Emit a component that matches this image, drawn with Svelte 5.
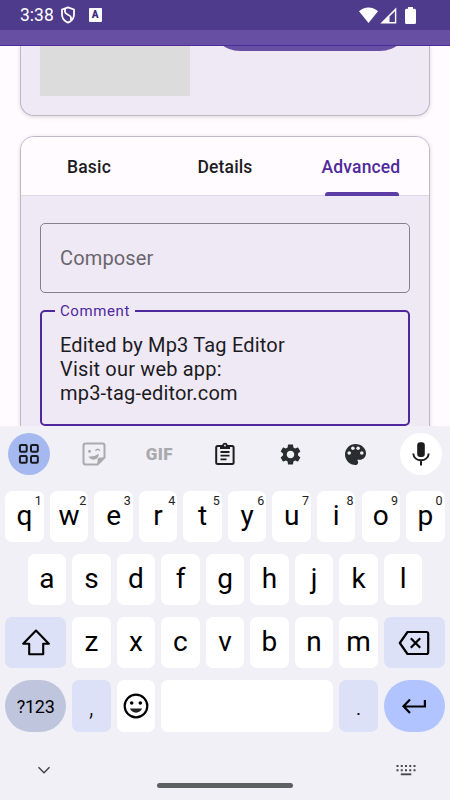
<script lang="ts">
	const tabs = ['Basic', 'Details', 'Advanced'];
	let activeTab = $state('Advanced');
	let composer = $state('');
	let comment = $state('Edited by Mp3 Tag Editor\nVisit our web app:\nmp3-tag-editor.com');

	const topRow = 'qwertyuiop'.split('');
	const homeRow = 'asdfghjkl'.split('');
	const bottomRow = 'zxcvbnm'.split('');

	// the number hint in the corner of each top row key
	const hint = (index: number) => (index + 1) % 10;

	const type = (letter: string) => {
		comment += letter;
	};

	const backspace = () => {
		comment = comment.slice(0, -1);
	};
</script>

<div class="screen">
	<div class="status-bar">
		<span class="clock">3:38</span>
		<svg class="shield" viewBox="0 0 16 18" width="16" height="18">
			<path
				d="M8 1.3 14 3.5V8.5C14 12.3 11.7 15 8 16.6 4.3 15 2 12.3 2 8.5V3.5Z"
				fill="none"
				stroke="#fff"
				stroke-width="1.8"
				stroke-linejoin="round"
			/>
			<path
				d="M5 3V6C5 8.5 11 9 11 11.5V14"
				fill="none"
				stroke="#fff"
				stroke-width="1.8"
			/>
		</svg>
		<span class="letter-box">A</span>
		<span class="spacer"></span>
		<svg viewBox="0 0 19 16" width="19" height="16">
			<path d="M0 4.3C5 -.8 14 -.8 19 4.3L9.5 16Z" fill="#fff" />
		</svg>
		<svg class="signal" viewBox="0 0 17 17" width="17" height="17">
			<path
				fill-rule="evenodd"
				d="M16.3 .5V16.5H.3ZM14.9 4.2 9.5 9.5V15.1H14.9Z"
				fill="#fff"
			/>
		</svg>
		<svg class="battery" viewBox="0 0 11 17" width="11" height="17">
			<path
				d="M3 0H8V1.7H9.5Q11 1.7 11 3.2V15.5Q11 17 9.5 17H1.5Q0 17 0 15.5V3.2Q0 1.7 1.5 1.7H3Z"
				fill="#fff"
			/>
		</svg>
	</div>
	<div class="app-bar"></div>

	<div class="content">
		<div class="card cover-card">
			<div class="cover"></div>
			<button class="cover-button" aria-label="Choose cover"></button>
		</div>

		<div class="card form-card">
			<div class="tabs">
				{#each tabs as tab}
					<button class="tab" class:active={tab === activeTab} onclick={() => (activeTab = tab)}>
						<span class="tab-label">{tab}</span>
						<span class="indicator"></span>
					</button>
				{/each}
			</div>
			<div class="fields">
				<input class="composer" placeholder="Composer" bind:value={composer} />
				<fieldset>
					<legend>Comment</legend>
					<div class="comment">{comment}</div>
				</fieldset>
			</div>
		</div>
	</div>

	<div class="keyboard">
		<div class="toolbar">
			<button class="tool apps" aria-label="Apps">
				<svg viewBox="0 0 22 22" width="22" height="22" fill="none" stroke="#17191f" stroke-width="2">
					<rect x="1.9" y="2" width="6.8" height="6.8" rx="1.3" />
					<rect x="13" y="2" width="6.8" height="6.8" rx="1.3" />
					<rect x="1.9" y="13" width="6.8" height="6.8" rx="1.3" />
					<rect x="13" y="13" width="6.8" height="6.8" rx="1.3" />
				</svg>
			</button>
			<button class="tool" aria-label="Stickers">
				<svg viewBox="0 0 24 24" width="24" height="24">
					<path
						d="M3.5 1.5H20.5Q22.5 1.5 22.5 3.5V15.5L15.5 22.5H3.5Q1.5 22.5 1.5 20.5V3.5Q1.5 1.5 3.5 1.5Z"
						fill="none"
						stroke="#a9a9ae"
						stroke-width="2"
					/>
					<path d="M22.5 15.5H18Q15.5 15.5 15.5 18V22.5Z" fill="#a9a9ae" />
					<circle cx="7.5" cy="9.2" r="1.5" fill="#a9a9ae" />
					<path d="M13.5 8.7Q15.7 6 17.8 8.7" fill="none" stroke="#a9a9ae" stroke-width="1.5" />
					<path d="M6.5 14.5Q12.5 15 16.8 11.7C17 18.5 9 19.5 6.5 14.5Z" fill="#a9a9ae" />
				</svg>
			</button>
			<button class="tool gif">GIF</button>
			<button class="tool" aria-label="Clipboard">
				<svg viewBox="0 0 22 24" width="22" height="24">
					<rect x="2.2" y="4" width="17.4" height="18" rx="1.5" fill="none" stroke="#1d1d20" stroke-width="2" />
					<path d="M6 3H8.2A2.9 2.9 0 0 1 13.8 3H16V7H6Z" fill="#1d1d20" />
					<circle cx="11" cy="3.5" r=".9" fill="#f1f0f7" />
					<path d="M6.5 10H15.5M6.5 13.7H15.5M6.5 17.3H12.5" stroke="#1d1d20" stroke-width="1.8" />
				</svg>
			</button>
			<button class="tool" aria-label="Settings">
				<svg viewBox="2 2 20 20" width="21" height="21">
					<path
						d="M19.14 12.94c.04-.3.06-.61.06-.94 0-.32-.02-.64-.07-.94l2.03-1.58c.18-.14.23-.41.12-.61l-1.92-3.32c-.12-.22-.37-.29-.59-.22l-2.39.96c-.5-.38-1.03-.7-1.62-.94l-.36-2.54c-.04-.24-.24-.41-.48-.41h-3.84c-.24 0-.43.17-.47.41l-.36 2.54c-.59.24-1.13.57-1.62.94l-2.39-.96c-.22-.08-.47 0-.59.22L2.74 8.87c-.12.21-.08.47.12.61l2.03 1.58c-.05.3-.09.63-.09.94s.02.64.07.94l-2.03 1.58c-.18.14-.23.41-.12.61l1.92 3.32c.12.22.37.29.59.22l2.39-.96c.5.38 1.03.7 1.62.94l.36 2.54c.05.24.24.41.48.41h3.84c.24 0 .44-.17.47-.41l.36-2.54c.59-.24 1.13-.56 1.62-.94l2.39.96c.22.08.47 0 .59-.22l1.92-3.32c.12-.22.07-.47-.12-.61l-2.01-1.58zM12 15.6c-1.98 0-3.6-1.62-3.6-3.6s1.62-3.6 3.6-3.6 3.6 1.62 3.6 3.6-1.62 3.6-3.6 3.6z"
						fill="#2b2c30"
					/>
				</svg>
			</button>
			<button class="tool" aria-label="Theme">
				<svg viewBox="2 2 20 20" width="21" height="21">
					<path
						d="M12 2C6.49 2 2 6.49 2 12s4.49 10 10 10c1.38 0 2.5-1.12 2.5-2.5 0-.61-.23-1.2-.64-1.67-.08-.1-.13-.21-.13-.33 0-.28.22-.5.5-.5H16c3.31 0 6-2.69 6-6C22 6.04 17.51 2 12 2z"
						fill="#2b2c30"
					/>
					<circle cx="6" cy="10.5" r="1.7" fill="#f1f0f7" />
					<circle cx="9.5" cy="6" r="1.7" fill="#f1f0f7" />
					<circle cx="14.5" cy="6" r="1.7" fill="#f1f0f7" />
					<circle cx="18" cy="10.5" r="1.7" fill="#f1f0f7" />
				</svg>
			</button>
			<button class="tool mic" aria-label="Voice input">
				<svg viewBox="0 0 18 24" width="18" height="24">
					<rect x="5.2" y=".3" width="7.6" height="14.7" rx="3" fill="#1c1c1f" />
					<path
						d="M1.3 11.5C1.8 20.5 16.2 20.5 16.7 11.5M9 18V23.5"
						fill="none"
						stroke="#1c1c1f"
						stroke-width="2"
					/>
				</svg>
			</button>
		</div>

		<div class="rows">
			<div class="row">
				{#each topRow as letter, i}
					<button class="key" onclick={() => type(letter)}>
						{letter}<span class="hint">{hint(i)}</span>
					</button>
				{/each}
			</div>
			<div class="row home">
				{#each homeRow as letter}
					<button class="key" onclick={() => type(letter)}>{letter}</button>
				{/each}
			</div>
			<div class="row">
				<button class="key wide tinted" aria-label="Shift">
					<svg viewBox="0 0 28 28" width="28" height="28">
						<path
							d="M14 1.5 26.8 14.7H21.2V25.2H7.2V14.7H1.2Z"
							fill="none"
							stroke="#000"
							stroke-width="2.1"
							stroke-linejoin="round"
						/>
					</svg>
				</button>
				{#each bottomRow as letter}
					<button class="key" onclick={() => type(letter)}>{letter}</button>
				{/each}
				<button class="key wide tinted" aria-label="Backspace" onclick={backspace}>
					<svg viewBox="0 0 32 26" width="32" height="26" fill="none" stroke="#000" stroke-width="2.2">
						<path
							d="M9.5 2H28.5Q30.2 2 30.2 3.7V22.3Q30.2 24 28.5 24H9.5L1.8 13Z"
							stroke-linejoin="round"
						/>
						<path d="M12.8 8.2 22.2 17.8M22.2 8.2 12.8 17.8" />
					</svg>
				</button>
			</div>
			<div class="row last">
				<button class="key wide symbols">?123</button>
				<button class="key tinted mark" onclick={() => type(',')}>,</button>
				<button class="key emoji" aria-label="Emoji">
					<svg viewBox="0 0 26 26" width="26" height="26">
						<circle cx="13" cy="13" r="11.3" fill="none" stroke="#000" stroke-width="2.2" />
						<circle cx="8.7" cy="10" r="1.8" />
						<circle cx="17.3" cy="10" r="1.8" />
						<path d="M7 15.5H19C17.5 21 8.5 21 7 15.5Z" fill="#222" />
					</svg>
				</button>
				<button class="key space" aria-label="Space" onclick={() => type(' ')}></button>
				<button class="key tinted mark" onclick={() => type('.')}>.</button>
				<button class="key wide enter" aria-label="Enter" onclick={() => type('\n')}>
					<svg viewBox="0 0 26 18" width="26" height="18" fill="none" stroke="#000" stroke-width="2.2">
						<path d="M23.9 3V9.5H3M9 2.5 2.5 9.2 9 16" />
					</svg>
				</button>
			</div>
		</div>

		<div class="nav">
			<svg viewBox="0 0 14 8" width="14" height="8">
				<path d="M1.5 1.2 7 6.7 12.5 1.2" fill="none" stroke="#444549" stroke-width="1.5" />
			</svg>
			<span class="home-handle"></span>
			<svg viewBox="0 0 20 12" width="20" height="12" stroke="#47484c" stroke-width="1.9">
				<path d="M.5 2H19.5M.5 6.2H19.5" stroke-dasharray="2 2.25" />
				<path d="M4.8 10.3H15.3" />
			</svg>
		</div>
	</div>
</div>

<style>
	:global(body) {
		margin: 0;
	}

	.screen {
		display: flex;
		flex-direction: column;
		width: 450px;
		height: 800px;
		overflow: hidden;
		background: #fffbff;
		font-family: Roboto, sans-serif;
		color: #1c1b1f;
	}

	button {
		padding: 0;
		border: none;
		background: none;
		font: inherit;
		color: inherit;
	}

	svg {
		display: block;
		flex: none;
	}

	.status-bar {
		display: flex;
		align-items: center;
		flex: none;
		box-sizing: border-box;
		height: 30px;
		padding: 0 34px 0 20px;
		background: #4f3b8b;
	}

	.clock {
		width: 40px;
		font-size: 17.5px;
		color: #fff;
	}

	.letter-box {
		width: 12.5px;
		height: 13.5px;
		margin-left: 13px;
		border-radius: 1px;
		background: #fff;
		font-size: 10px;
		font-weight: 900;
		line-height: 14px;
		text-align: center;
		color: #3f2b7b;
	}

	.spacer {
		flex: 1;
	}

	.signal {
		margin-left: 2px;
	}

	.battery {
		margin-left: 8px;
	}

	.app-bar {
		flex: none;
		box-sizing: border-box;
		height: 16px;
		background: #6750a4;
		border-bottom: 1px solid #4f2a9b;
	}

	.content {
		flex: none;
		height: 380px;
		padding: 0 20px;
		overflow: hidden;
	}

	.card {
		box-sizing: border-box;
		border: 1px solid #bdb8c6;
		background: #efe9f5;
		box-shadow: 0 1px 4px rgba(0, 0, 0, 0.15);
	}

	.cover-card {
		display: flex;
		justify-content: space-between;
		align-items: flex-start;
		height: 70px;
		padding: 0 19px;
		border-top: none;
		border-radius: 0 0 14px 14px;
	}

	.cover {
		width: 150px;
		height: 50px;
		background: #dcdcdc;
	}

	.cover-button {
		width: 200px;
		height: 60px;
		margin-top: -55.5px;
		border-radius: 30px;
		background: #6750a4;
	}

	.form-card {
		height: 400px;
		margin-top: 20px;
		border-radius: 14px;
		overflow: hidden;
	}

	.tabs {
		display: flex;
		height: 58px;
		background: #fffbff;
		border-bottom: 1px solid #dcd8e6;
	}

	.tab {
		display: flex;
		flex-direction: column;
		align-items: center;
		flex: 1;
		height: 59px;
		font-size: 17.5px;
		font-weight: 500;
		line-height: 60px;
		letter-spacing: 0.15px;
	}

	.tab-label {
		height: 55px;
	}

	.tab.active {
		color: #4f2a9b;
	}

	.indicator {
		width: 74px;
		height: 4px;
		margin-left: 2px;
		border-radius: 3px 3px 0 0;
	}

	.active .indicator {
		background: #5b3da5;
	}

	.fields {
		padding: 27px 19px;
	}

	.composer {
		display: block;
		box-sizing: border-box;
		width: 100%;
		height: 70px;
		padding: 0 19px;
		border: 1px solid #85808a;
		border-radius: 5px;
		background: none;
		font: inherit;
		font-size: 20px;
		letter-spacing: 0.15px;
	}

	.composer::placeholder {
		color: #69656e;
		opacity: 1;
	}

	fieldset {
		box-sizing: border-box;
		height: 124px;
		margin: 9px 0 0;
		padding: 0 18px 0 13px;
		border: 2px solid #50289d;
		border-radius: 5px;
	}

	legend {
		padding: 0 5px;
		font-size: 15px;
		line-height: 18px;
		letter-spacing: 0.6px;
		color: #50289d;
	}

	.comment {
		margin: 12.5px 0 0 5px;
		font-size: 20px;
		line-height: 24px;
		letter-spacing: 0.18px;
		white-space: pre-line;
	}

	.keyboard {
		display: flex;
		flex-direction: column;
		flex: 1;
		background: #f1f0f7;
	}

	.toolbar {
		display: flex;
		justify-content: space-between;
		padding: 7px 8px 0 7.5px;
	}

	.tool {
		display: flex;
		align-items: center;
		justify-content: center;
		width: 42px;
		height: 42px;
		border-radius: 50%;
	}

	.apps {
		background: #a6b8f0;
	}

	.gif {
		font-size: 17px;
		font-weight: 900;
		letter-spacing: 0.3px;
		color: #a9a9ae;
	}

	.mic {
		background: #fff;
	}

	.rows {
		display: flex;
		flex-direction: column;
		gap: 12px;
		padding: 16px 5.3px 0;
	}

	.row {
		display: flex;
		gap: 6.1px;
		height: 51px;
	}

	.home {
		padding: 0 22.4px;
	}

	.last {
		height: 52px;
	}

	.key {
		position: relative;
		display: flex;
		align-items: center;
		justify-content: center;
		flex: none;
		box-sizing: border-box;
		width: 38.45px;
		padding-bottom: 2px;
		border-radius: 7px;
		background: #fff;
		font-size: 28px;
		color: #000;
	}

	.hint {
		position: absolute;
		top: 2px;
		right: 2px;
		font-size: 12.5px;
		color: #222;
	}

	.wide {
		width: 60.75px;
		padding-bottom: 0;
	}

	.tinted {
		background: #dde1f7;
	}

	.mark {
		padding-bottom: 0;
		font-size: 26px;
		font-weight: 300;
	}

	.emoji {
		padding-bottom: 0;
	}

	.symbols {
		border-radius: 26px;
		background: #bfc5dd;
		font-size: 18px;
		letter-spacing: -0.2px;
	}

	.space {
		flex: 1;
	}

	.enter {
		border-radius: 26px;
		background: #b1c4ff;
	}

	.nav {
		display: flex;
		align-items: center;
		justify-content: space-between;
		height: 12px;
		padding: 32px 34px 0 37px;
	}

	.home-handle {
		width: 136px;
		height: 5px;
		margin: 30px 0 0 2px;
		border-radius: 3px;
		background: #5e5f61;
	}
</style>
